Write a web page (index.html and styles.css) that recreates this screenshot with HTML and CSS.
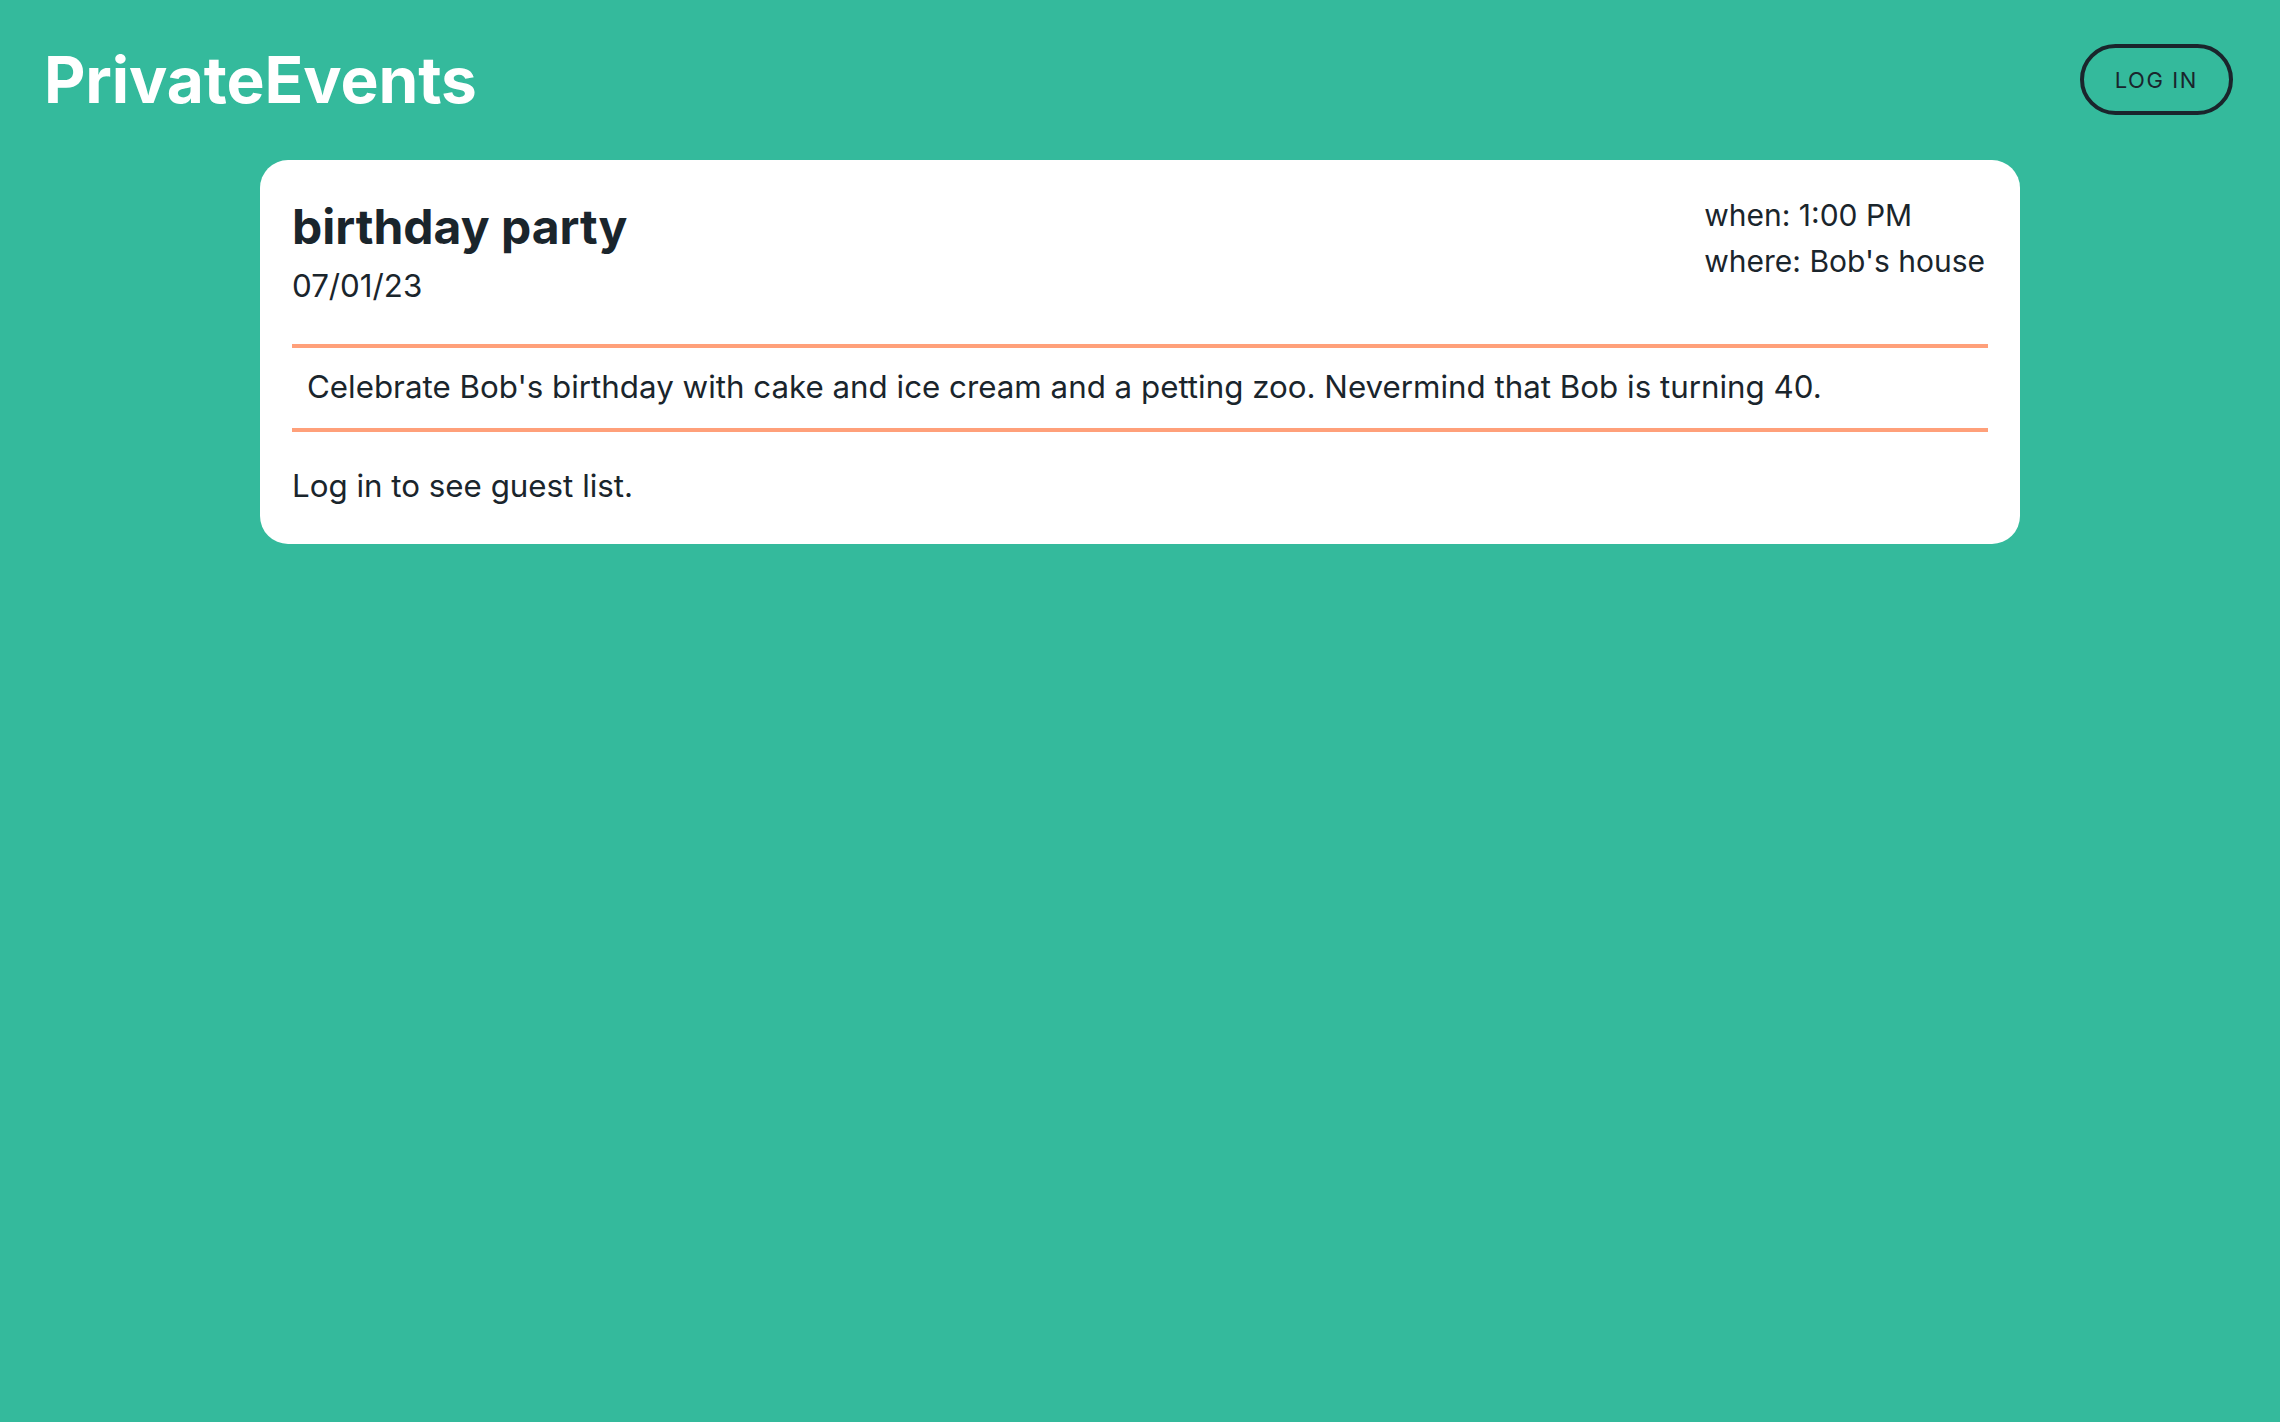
FILE: index.html
```html
<!DOCTYPE html>
<html lang="en">
<head>
<meta charset="utf-8">
<title>PrivateEvents</title>
<link rel="stylesheet" href="styles.css">
</head>
<body>
<header class="site-header">
  <h1 class="brand">PrivateEvents</h1>
  <button class="login-btn" type="button">LOG IN</button>
</header>
<main class="content">
  <article class="event-card">
    <div class="event-top">
      <div class="event-heading">
        <h2 class="event-title">birthday party</h2>
        <div class="event-date">07/01/23</div>
      </div>
      <div class="event-meta">
        <div>when: 1:00 PM</div>
        <div>where: Bob's house</div>
      </div>
    </div>
    <p class="event-desc">Celebrate Bob's birthday with cake and ice cream and a petting zoo. Nevermind that Bob is turning 40.</p>
    <p class="event-guests">Log in to see guest list.</p>
  </article>
</main>
</body>
</html>
```
FILE: styles.css
```css
html, body {
  margin: 0;
  padding: 0;
}

body {
  background: #34ba9c;
  color: #1a252c;
  font-family: "Inter", "Liberation Sans", sans-serif;
  min-height: 1422px;
}

.site-header {
  height: 160px;
  display: flex;
  align-items: center;
  justify-content: space-between;
  padding: 0 47px 0 44px;
  box-sizing: border-box;
}

.brand {
  margin: 0;
  font-size: 64px;
  font-weight: 700;
  line-height: 64px;
  color: #ffffff;
  letter-spacing: -0.1px;
}

.login-btn {
  height: 71px;
  padding: 0 31px;
  border: 4px solid #1a252c;
  border-radius: 40px;
  background: transparent;
  color: #1a252c;
  font-family: "Inter", "Liberation Sans", sans-serif;
  font-size: 22px;
  font-weight: 400;
  letter-spacing: 1.6px;
  box-sizing: border-box;
  margin-top: -1px;
}

.content {
  display: flex;
  justify-content: center;
}

.event-card {
  width: 1760px;
  box-sizing: border-box;
  background: #ffffff;
  border-radius: 28px;
  padding: 33px 32px 34px 32px;
}

.event-top {
  display: flex;
  justify-content: space-between;
  align-items: flex-start;
  padding-bottom: 34px;
  border-bottom: 4px solid #ffa07a;
}

.event-title {
  margin: 0;
  font-size: 48px;
  font-weight: 700;
  line-height: 68px;
}

.event-date {
  margin-top: 2px;
  font-size: 31.3px;
  line-height: 47px;
}

.event-meta {
  font-size: 30px;
  line-height: 46px;
  text-align: left;
  padding-right: 3px;
  margin-top: -1px;
}

.event-desc {
  margin: 0;
  padding: 16px 0 17px 15px;
  font-size: 31.3px;
  line-height: 47px;
  border-bottom: 4px solid #ffa07a;
}

.event-guests {
  margin: 31px 0 0;
  font-size: 31.3px;
  line-height: 47px;
}
```
